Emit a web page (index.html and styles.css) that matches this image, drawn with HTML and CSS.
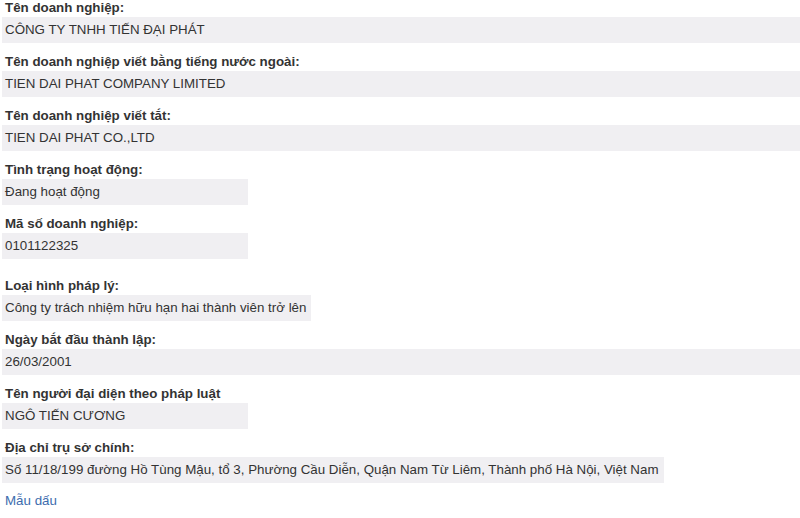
FILE: index.html
```html
<!DOCTYPE html>
<html lang="vi">
<head>
<meta charset="utf-8">
<title>Thông tin doanh nghiệp</title>
<link rel="stylesheet" href="styles.css">
</head>
<body>
<div class="info">
  <div class="row">
    <div class="label">Tên doanh nghiệp:</div>
    <div class="value full">CÔNG TY TNHH TIẾN ĐẠI PHÁT</div>
  </div>
  <div class="row">
    <div class="label">Tên doanh nghiệp viết bằng tiếng nước ngoài:</div>
    <div class="value full">TIEN DAI PHAT COMPANY LIMITED</div>
  </div>
  <div class="row">
    <div class="label">Tên doanh nghiệp viết tắt:</div>
    <div class="value full">TIEN DAI PHAT CO.,LTD</div>
  </div>
  <div class="row">
    <div class="label">Tình trạng hoạt động:</div>
    <div class="value short">Đang hoạt động</div>
  </div>
  <div class="row">
    <div class="label">Mã số doanh nghiệp:</div>
    <div class="value short">0101122325</div>
  </div>
  <div class="row spaced">
    <div class="label">Loại hình pháp lý:</div>
    <div class="value fit">Công ty trách nhiệm hữu hạn hai thành viên trở lên</div>
  </div>
  <div class="row">
    <div class="label">Ngày bắt đầu thành lập:</div>
    <div class="value full">26/03/2001</div>
  </div>
  <div class="row">
    <div class="label">Tên người đại diện theo pháp luật</div>
    <div class="value short">NGÔ TIẾN CƯƠNG</div>
  </div>
  <div class="row">
    <div class="label">Địa chỉ trụ sở chính:</div>
    <div class="value fit">Số 11/18/199 đường Hồ Tùng Mậu, tổ 3, Phường Cầu Diễn, Quận Nam Từ Liêm, Thành phố Hà Nội, Việt Nam</div>
  </div>
  <a class="link" href="#">Mẫu dấu</a>
</div>
</body>
</html>
```
FILE: styles.css
```css
html, body {
  margin: 0;
  padding: 0;
  background: #ffffff;
}
body {
  font-family: "Liberation Sans", Arial, sans-serif;
  font-size: 13.33px;
  color: #333333;
  overflow: hidden;
}
.info {
  display: flex;
  flex-direction: column;
  align-items: flex-start;
  margin-top: -1px;
  padding-left: 2px;
}
.row {
  display: flex;
  flex-direction: column;
  align-items: flex-start;
  align-self: stretch;
  margin-top: 10px;
}
.row:first-child {
  margin-top: 0;
}
.row.spaced {
  margin-top: 18px;
}
.label {
  font-weight: bold;
  line-height: 18px;
  color: #333333;
  padding-left: 3px;
}
.value {
  box-sizing: border-box;
  height: 26px;
  line-height: 26px;
  padding: 0 5px 0 3px;
  background: #f0eff2;
  color: #333333;
  white-space: nowrap;
}
.value.full {
  align-self: stretch;
}
.value.short {
  width: 246px;
}
.link {
  margin-top: 9px;
  line-height: 18px;
  padding-left: 3px;
  color: #3d6cae;
  text-decoration: none;
}
```
